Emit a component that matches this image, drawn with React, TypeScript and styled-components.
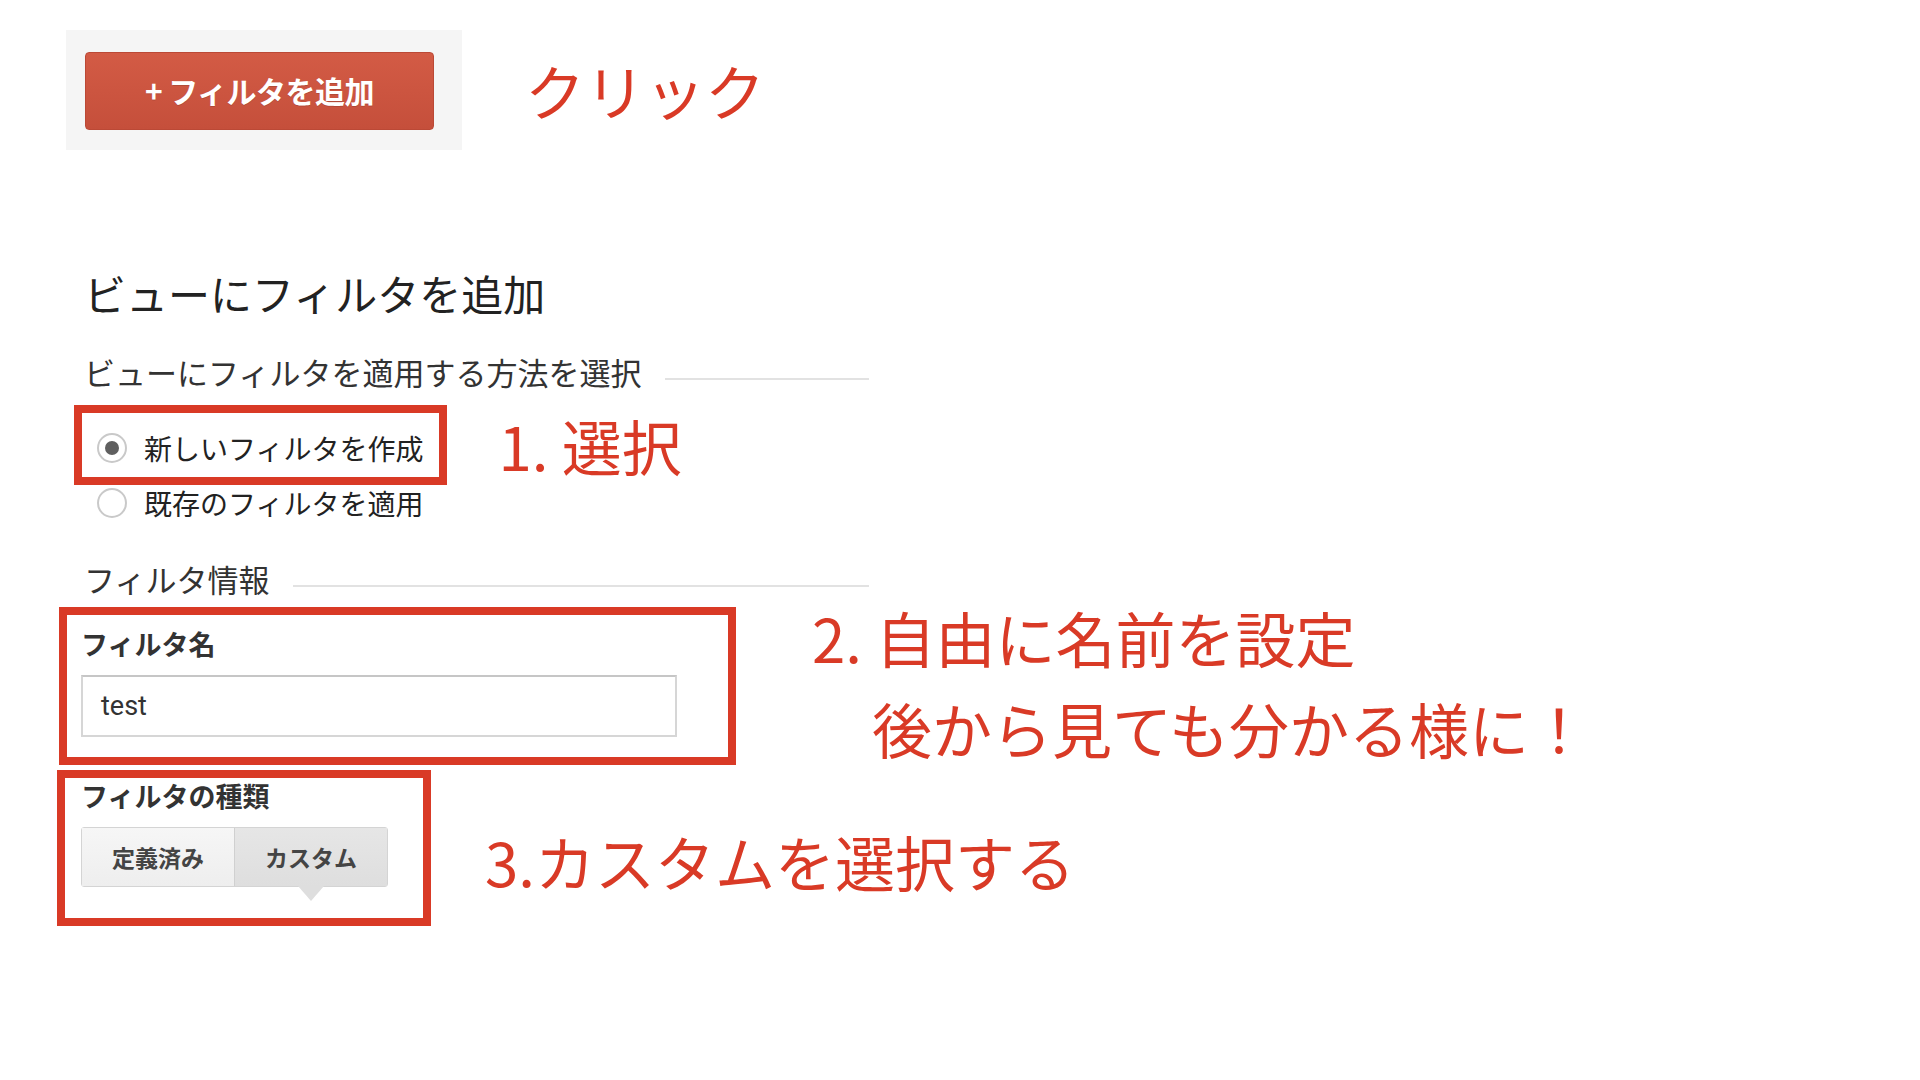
import React from "react";
import styled, { createGlobalStyle } from "styled-components";

const RED = "#d93a26";
const JP = `"Noto Sans CJK JP", "Noto Sans", sans-serif`;

const GlobalStyle = createGlobalStyle`
  html, body { margin: 0; padding: 0; background: #ffffff; }
  body { font-family: ${JP}; color: #222; }
  * { box-sizing: border-box; }
`;

const Page = styled.div`
  width: 1920px;
  height: 1080px;
  padding: 30px 0 0 66px;
  overflow: hidden;
`;

const TopRow = styled.div`
  display: flex;
  align-items: center;
`;

const GreyPanel = styled.div`
  background: #f5f5f5;
  padding: 22px 28px 20px 19px;
`;

const AddButton = styled.button`
  display: flex;
  align-items: center;
  justify-content: center;
  width: 349px;
  height: 78px;
  border: 1px solid #bb4936;
  border-radius: 4px;
  background: linear-gradient(#d35b45, #c54f3b);
  color: #fff;
  font-family: ${JP};
  font-weight: 700;
  font-size: 30px;
  letter-spacing: -0.5px;
  text-shadow: 0 1px 0 rgba(0, 0, 0, 0.15);
  padding: 0 0 2px 0;
  cursor: pointer;
`;

const Plus = styled.span`
  margin-right: 6px;
`;

const Annotation = styled.div<{ $ml?: number; $mt?: number; $pl?: number }>`
  font-family: ${JP};
  font-size: 60px;
  line-height: 60px;
  font-weight: 400;
  color: ${RED};
  white-space: nowrap;
  margin-left: ${(p) => p.$ml ?? 0}px;
  margin-top: ${(p) => p.$mt ?? 0}px;
  padding-left: ${(p) => p.$pl ?? 0}px;
`;

const Form = styled.div`
  padding-left: 18px;
  display: flex;
  flex-direction: column;
`;

const Heading = styled.h1`
  margin: 118px 0 0 0;
  font-size: 42px;
  line-height: 50px;
  font-weight: 400;
  color: #222;
`;

const SectionHeader = styled.div<{ $mt: number }>`
  display: flex;
  align-items: center;
  width: 785px;
  margin-top: ${(p) => p.$mt}px;
  font-size: 31px;
  line-height: 40px;
  color: #333;
`;

const SectionRule = styled.div`
  flex: 1;
  height: 2px;
  background: #e2e2e2;
  margin-left: 24px;
  margin-top: 14px;
`;

const AnnotatedRow = styled.div<{ $mt: number; $align?: string }>`
  display: flex;
  align-items: ${(p) => p.$align ?? "center"};
  margin-top: ${(p) => p.$mt}px;
`;

const Highlight = styled.div<{ $ml: number; $pad: string; $w?: number }>`
  border: 8px solid ${RED};
  margin-left: ${(p) => p.$ml}px;
  padding: ${(p) => p.$pad};
  width: ${(p) => (p.$w ? `${p.$w}px` : "auto")};
  flex-shrink: 0;
`;

const RadioRow = styled.label<{ $h: number; $pl?: number }>`
  display: flex;
  align-items: center;
  height: ${(p) => p.$h}px;
  padding-left: ${(p) => p.$pl ?? 0}px;
  font-size: 28px;
  color: #222;
  white-space: nowrap;
`;

const RadioCircle = styled.span<{ $checked?: boolean }>`
  position: relative;
  width: 30px;
  height: 30px;
  border-radius: 50%;
  border: 2px solid #c9c9c9;
  background: #fff;
  margin-right: 17px;
  flex-shrink: 0;
  &::after {
    content: "";
    display: ${(p) => (p.$checked ? "block" : "none")};
    position: absolute;
    left: 50%;
    top: 50%;
    width: 14px;
    height: 14px;
    margin: -7px 0 0 -7px;
    border-radius: 50%;
    background: #5f5f5f;
  }
`;

const FieldLabel = styled.div<{ $lh: number }>`
  font-size: 27px;
  line-height: ${(p) => p.$lh}px;
  font-weight: 700;
  color: #333;
  white-space: nowrap;
`;

const TextInput = styled.div`
  width: 596px;
  height: 62px;
  margin-top: 14px;
  border: 2px solid #d6d6d6;
  border-top-color: #c6c6c6;
  background: #fff;
  display: flex;
  align-items: center;
  padding-left: 18px;
  font-family: Roboto, "Liberation Sans", sans-serif;
  font-size: 27px;
  color: #333;
`;

const Segmented = styled.div`
  display: flex;
  margin-top: 17px;
  width: 307px;
  height: 60px;
  border: 1px solid #d4d4d4;
  border-radius: 3px;
`;

const Segment = styled.div<{ $selected?: boolean }>`
  position: relative;
  flex: 1;
  display: flex;
  align-items: center;
  justify-content: center;
  font-size: 23px;
  font-weight: 700;
  color: #444;
  background: ${(p) =>
    p.$selected ? "linear-gradient(#e6e6e6, #dedede)" : "linear-gradient(#f6f6f6, #eeeeee)"};
  & + & {
    border-left: 1px solid #d0d0d0;
  }
  &::after {
    content: "";
    display: ${(p) => (p.$selected ? "block" : "none")};
    position: absolute;
    left: 50%;
    bottom: -15px;
    margin-left: -13px;
    border-left: 13px solid transparent;
    border-right: 13px solid transparent;
    border-top: 15px solid #dedede;
  }
`;

export default function App() {
  return (
    <>
      <GlobalStyle />
      <Page>
        <TopRow>
          <GreyPanel>
            <AddButton>
              <Plus>+</Plus>フィルタを追加
            </AddButton>
          </GreyPanel>
          <Annotation $ml={63}>クリック</Annotation>
        </TopRow>

        <Form>
          <Heading>ビューにフィルタを追加</Heading>

          <SectionHeader $mt={34}>
            <span>ビューにフィルタを適用する方法を選択</span>
            <SectionRule />
          </SectionHeader>

          <AnnotatedRow $mt={13}>
            <Highlight $ml={-10} $pad="6px 16px 0 15px">
              <RadioRow $h={58}>
                <RadioCircle $checked />
                新しいフィルタを作成
              </RadioRow>
            </Highlight>
            <Annotation $ml={51}>1. 選択</Annotation>
          </AnnotatedRow>
          <RadioRow $h={36} $pl={13}>
            <RadioCircle />
            既存のフィルタを適用
          </RadioRow>

          <SectionHeader $mt={38}>
            <span>フィルタ情報</span>
            <SectionRule />
          </SectionHeader>

          <AnnotatedRow $mt={8} $align="flex-start">
            <Highlight $ml={-25} $pad="12px 51px 20px 14px" $w={677}>
              <FieldLabel $lh={34}>フィルタ名</FieldLabel>
              <TextInput>test</TextInput>
            </Highlight>
            <div>
              <Annotation $ml={76} $mt={0}>2. 自由に名前を設定</Annotation>
              <Annotation $ml={76} $mt={31} $pl={60}>後から見ても分かる様に！</Annotation>
            </div>
          </AnnotatedRow>

          <AnnotatedRow $mt={5} $align="flex-start">
            <Highlight $ml={-27} $pad="4px 35px 31px 16px" $w={374}>
              <FieldLabel $lh={28}>フィルタの種類</FieldLabel>
              <Segmented>
                <Segment>定義済み</Segment>
                <Segment $selected>カスタム</Segment>
              </Segmented>
            </Highlight>
            <Annotation $ml={54} $mt={61}>3.カスタムを選択する</Annotation>
          </AnnotatedRow>
        </Form>
      </Page>
    </>
  );
}
